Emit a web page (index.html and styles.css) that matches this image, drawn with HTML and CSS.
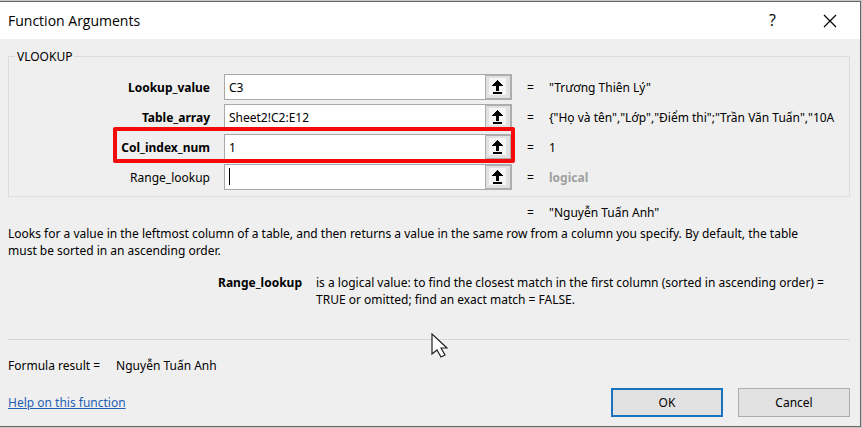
FILE: index.html
```html
<!DOCTYPE html>
<html lang="en">
<head>
    <meta charset="UTF-8">
    <meta name="viewport" content="width=device-width, initial-scale=1.0">
    <title>Function Arguments</title>
    <link rel="stylesheet" href="styles.css">
</head>
<body>
    <svg class="icon-defs" width="0" height="0" aria-hidden="true">
        <symbol id="collapse" viewBox="0 0 24 22">
            <path fill="#f6f6f6" d="M3 2h17v17H3z"/>
            <path d="M11 4h1v1h1v1h1v1h1v1h1v1h1v1h-4v5h-3v-5H6V9h1V8h1V7h1V6h1V5h1zM7 16h9v2H7z"/>
        </symbol>
    </svg>
    <div class="dialog">
        <header class="title-bar">
            <h1 class="title">Function Arguments</h1>
            <button class="title-button" type="button" aria-label="Help">?</button>
            <button class="title-button" type="button" aria-label="Close">
                <svg width="14" height="14" viewBox="0 0 14 14"><path d="M1 1l12 12M13 1L1 13" stroke="#000" stroke-width="1.2"/></svg>
            </button>
        </header>
        <form class="content">
            <fieldset class="arguments">
                <legend>VLOOKUP</legend>
                <div class="row">
                    <label class="name required" for="lookupValue">Lookup_value</label>
                    <div class="field">
                        <input type="text" id="lookupValue" value="C3">
                        <button type="button" aria-label="Select Lookup_value"><svg><use href="#collapse"/></svg></button>
                    </div>
                    <span class="equals">=</span>
                    <span class="value">"Trương Thiên Lý"</span>
                </div>
                <div class="row">
                    <label class="name required" for="tableArray">Table_array</label>
                    <div class="field">
                        <input type="text" id="tableArray" value="Sheet2!C2:E12">
                        <button type="button" aria-label="Select Table_array"><svg><use href="#collapse"/></svg></button>
                    </div>
                    <span class="equals">=</span>
                    <span class="value">{"Họ và tên","Lớp","Điểm thi";"Trần Văn Tuấn","10A</span>
                </div>
                <div class="row marked">
                    <label class="name required" for="colIndexNum">Col_index_num</label>
                    <div class="field">
                        <input type="text" id="colIndexNum" value="1">
                        <button type="button" aria-label="Select Col_index_num"><svg><use href="#collapse"/></svg></button>
                    </div>
                    <span class="equals">=</span>
                    <span class="value">1</span>
                </div>
                <div class="row">
                    <label class="name" for="rangeLookup">Range_lookup</label>
                    <div class="field active">
                        <input type="text" id="rangeLookup">
                        <button type="button" aria-label="Select Range_lookup"><svg><use href="#collapse"/></svg></button>
                    </div>
                    <span class="equals">=</span>
                    <span class="value hint">logical</span>
                </div>
            </fieldset>
            <div class="result">
                <span class="equals">=</span>
                <span class="value">"Nguyễn Tuấn Anh"</span>
            </div>
            <p class="description">Looks for a value in the leftmost column of a table, and then returns a value in the same row from a column you specify. By default, the table must be sorted in an ascending order.</p>
            <dl class="argument-help">
                <dt>Range_lookup</dt>
                <dd>is a logical value: to find the closest match in the first column (sorted in ascending order) = TRUE or omitted; find an exact match = FALSE.</dd>
            </dl>
            <hr class="divider">
            <p class="formula"><span>Formula result =</span><span>Nguyễn Tuấn Anh</span></p>
            <footer class="actions">
                <a class="help-link" href="#">Help on this function</a>
                <button class="action default" type="button">OK</button>
                <button class="action" type="button">Cancel</button>
            </footer>
        </form>
        <svg class="pointer" width="17" height="26" viewBox="0 0 17 26"><path d="M1 1v20l5-4 4 7 4-2-4-7h6z" fill="#fff" stroke="#222" stroke-width="1.2"/></svg>
    </div>
</body>
</html>
```

FILE: styles.css
```css
*, *::before, *::after {
    box-sizing: border-box;
}
body {
    margin: 0;
    padding: 1px 1px 0 0;
    background: #c8c8c8;
    font-family: "Noto Sans", "Open Sans", sans-serif;
    font-size: 12px;
    line-height: 17px;
    color: #000;
}
.icon-defs {
    position: absolute;
}
.dialog {
    position: relative;
    background: #efefef;
    border: 1px solid #666;
    border-left: none;
}
.title-bar {
    display: flex;
    align-items: center;
    height: 37px;
    padding-left: 8px;
    background: #fff;
    font-family: "Open Sans", sans-serif;
}
.title {
    flex: 1;
    margin: 0;
    font-size: 14px;
    font-weight: normal;
}
.title-button {
    display: flex;
    align-items: center;
    justify-content: center;
    width: 57px;
    height: 37px;
    padding: 0;
    border: none;
    background: none;
    font: inherit;
    font-size: 16px;
}
.title-button:last-child {
    margin-right: 2px;
}
.content {
    padding: 9px 10px 9px 8px;
}
.arguments {
    min-width: 0;
    margin: 0;
    padding: 9px 12px 6px 0;
    border: 1px solid #dcdcdc;
}
.arguments legend {
    margin-left: 6px;
    padding: 0 2px;
}
.row {
    position: relative;
    display: flex;
    align-items: center;
    height: 26px;
    margin-bottom: 4px;
}
.row:last-child {
    margin-bottom: 0;
}
.name {
    width: 201px;
    margin-right: 14px;
    text-align: right;
}
.required {
    font-weight: bold;
}
.field {
    position: relative;
    display: flex;
    width: 288px;
    height: 26px;
}
.field input {
    flex: 1;
    min-width: 0;
    padding: 0 4px;
    border: 1px solid #a8a8a8;
    border-right: none;
    background: #fff;
    font: inherit;
    outline: none;
}
.field button {
    width: 27px;
    padding: 0;
    border: 2px solid #adadad;
    border-left-width: 1px;
    background: #e1e1e1;
}
.field svg {
    display: block;
    width: 24px;
    height: 22px;
}
/* text caret in the focused field */
.active::before {
    content: "";
    position: absolute;
    left: 5px;
    top: 4px;
    width: 1px;
    height: 17px;
    background: #000;
}
.marked::after {
    content: "";
    position: absolute;
    left: 104px;
    top: -7px;
    width: 402px;
    height: 36px;
    border: 4px solid #f50a0a;
    border-radius: 2px;
}
.equals {
    width: 22px;
    margin-left: 15px;
}
.value {
    flex: 1;
    min-width: 0;
    overflow: hidden;
    white-space: nowrap;
}
.hint {
    font-weight: bold;
    color: #a0a0a0;
}
.result {
    display: flex;
    margin-top: 7px;
    padding-left: 504px;
}
.description {
    margin: 4px 0 0;
    padding-right: 24px;
}
.argument-help {
    display: flex;
    margin: 15px 0 0;
}
.argument-help dt {
    width: 294px;
    margin-right: 14px;
    text-align: right;
    font-weight: bold;
}
.argument-help dd {
    flex: 1;
    margin: 0;
}
.divider {
    height: 1px;
    margin: 31px 0 17px;
    border: none;
    background: #d8d8d8;
}
.formula {
    display: flex;
    gap: 16px;
    margin: 0;
}
.actions {
    display: flex;
    align-items: center;
    gap: 15px;
    margin-top: 14px;
}
.help-link {
    margin-right: auto;
    color: #1f5fb4;
}
.action {
    width: 112px;
    height: 29px;
    padding: 0;
    border: 1px solid #adadad;
    background: #e1e1e1;
    font: inherit;
}
.default {
    border: 2px solid #1a72bd;
}
.pointer {
    position: absolute;
    left: 431px;
    top: 331px;
}
```
